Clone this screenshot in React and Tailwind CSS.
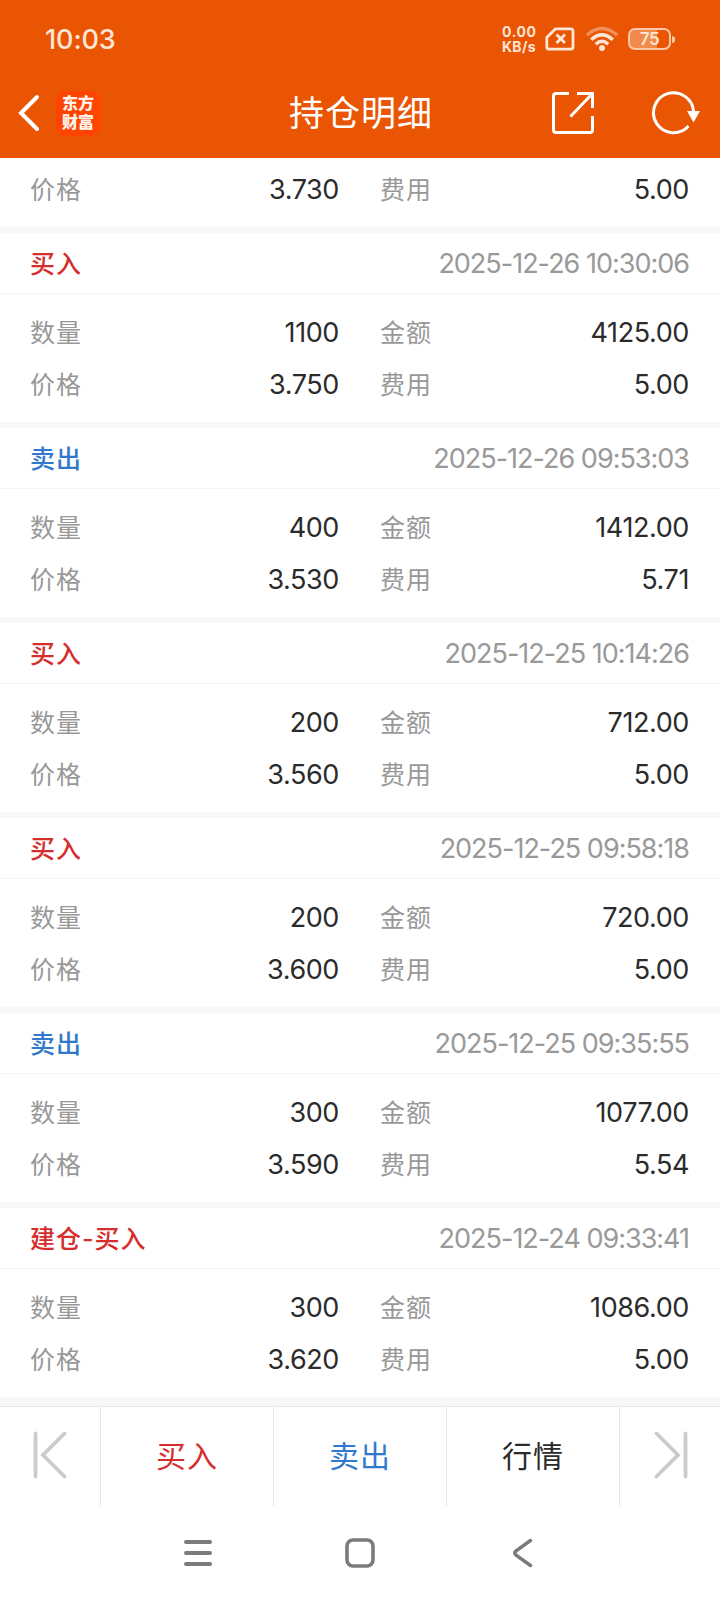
import React from 'react';
import clsx from 'clsx';

const trades = [
  { type: '买入', time: '2025-12-26 10:30:06', qty: '1100', amount: '4125.00', price: '3.750', fee: '5.00' },
  { type: '卖出', sell: true, time: '2025-12-26 09:53:03', qty: '400', amount: '1412.00', price: '3.530', fee: '5.71' },
  { type: '买入', time: '2025-12-25 10:14:26', qty: '200', amount: '712.00', price: '3.560', fee: '5.00' },
  { type: '买入', time: '2025-12-25 09:58:18', qty: '200', amount: '720.00', price: '3.600', fee: '5.00' },
  { type: '卖出', sell: true, time: '2025-12-25 09:35:55', qty: '300', amount: '1077.00', price: '3.590', fee: '5.54' },
  { type: '建仓-买入', time: '2025-12-24 09:33:41', qty: '300', amount: '1086.00', price: '3.620', fee: '5.00' },
];

function StatusBar() {
  return (
    <div className="flex h-[78px] items-center pl-[45px] pr-[45px] text-[#fde6d6]">
      <span className="pt-px text-[27px] leading-none font-medium tracking-[-0.1px]">10:03</span>
      <div className="ml-auto flex items-center">
        <div className="w-[36px] text-[14px] leading-[15px] font-bold whitespace-nowrap">
          <div className="tracking-[0.6px]">0.00</div>
          <div className="tracking-[0.3px]">KB/s</div>
        </div>
        <svg className="ml-[7px]" width="30" height="24" viewBox="0 0 30 24" fill="none" stroke="currentColor">
          <path d="M10.5 1.8H25.5Q28 1.8 28 4.3V19.7Q28 22.2 25.5 22.2H4.3Q1.8 22.2 1.8 19.7V10.5Z" strokeWidth="2.8" strokeLinejoin="round" />
          <path d="M11.5 7.5L20 16M20 7.5L11.5 16" strokeWidth="2.8" />
        </svg>
        <svg className="ml-[10px]" width="34" height="26" viewBox="0 0 34 26" fill="none" stroke="currentColor" strokeWidth="3.4">
          <path d="M1.8 9.2Q17 -4.2 32.2 9.2" opacity="0.4" />
          <path d="M6.2 13.8Q17 4 27.8 13.8" />
          <path d="M10.8 18.2Q17 12.4 23.2 18.2" />
          <circle cx="17" cy="22" r="2.9" fill="currentColor" stroke="none" />
        </svg>
        <div className="ml-[9px] flex items-center">
          <div className="flex h-[22px] w-[43px] items-center justify-center rounded-[7px] border-2 border-[#fbc7a5] bg-linear-to-r from-[#f28a4c] from-70% to-transparent to-70% text-[17px] leading-none font-semibold tracking-[-0.5px]">
            75
          </div>
          <div className="ml-px h-[7px] w-[3px] rounded-r-sm bg-[#fbc7a5]" />
        </div>
      </div>
    </div>
  );
}

function NavBar() {
  return (
    <div className="flex h-[80px] items-center pb-[10px] pl-[17px] pr-[19px]">
      <svg width="24" height="38" viewBox="0 0 24 38" fill="none" stroke="white" strokeWidth="4" strokeLinecap="round" strokeLinejoin="miter">
        <path d="M20 3L4 19L20 35" />
      </svg>
      <div className="ml-[15px] flex h-[45px] w-[44px] flex-col items-center justify-center rounded-[9px] bg-[#ff4300] text-[16px] leading-[19px] font-black text-[#fff3ec]">
        <span>东方</span>
        <span>财富</span>
      </div>
      <h1 className="ml-[189px] pt-px text-[35px] leading-none tracking-[1px] text-white">持仓明细</h1>
      <svg className="ml-auto" width="44" height="44" viewBox="0 0 44 44" fill="none" stroke="white" strokeWidth="3">
        <path d="M18 2.5H5Q2.5 2.5 2.5 5V39Q2.5 41.5 5 41.5H39Q41.5 41.5 41.5 39V25" />
        <path d="M26 2.5H41.5V17M41 3L19.5 25.5" />
      </svg>
      <svg className="ml-[56px]" width="50" height="44" viewBox="0 0 50 44" fill="none">
        <path d="M37.5 35A20 20 0 1 1 42.5 21" stroke="white" strokeWidth="3" />
        <path d="M36 20H49L42.5 31.5Z" fill="white" />
      </svg>
    </div>
  );
}

function Row({ cells }) {
  return (
    <div className="flex h-[52px] items-center pt-px pl-[30px] pr-[31px]">
      {cells.map(([label, value], i) => (
        <div key={label} className={clsx('flex items-center justify-between', i === 0 ? 'w-[309px]' : 'ml-[41px] flex-1')}>
          <span className="pt-px text-[25px] leading-none tracking-[1px] text-[#989898]">{label}</span>
          <span className="text-[27px] leading-none tracking-[-0.4px] text-[#2b2b2b]">{value}</span>
        </div>
      ))}
    </div>
  );
}

function TradeCard({ trade }) {
  return (
    <section className="mt-[6px] bg-white">
      <div className="flex h-[61px] items-center justify-between border-b border-[#f4f5f6] pt-px pl-[30px] pr-[31px]">
        <span className={clsx('pt-px text-[25px] leading-none font-medium tracking-[1px]', trade.sell ? 'text-[#3179cc]' : 'text-[#d62d2d]')}>
          {trade.type}
        </span>
        <span className="text-[27px] leading-none tracking-[-1px] text-[#999999]">{trade.time}</span>
      </div>
      <div className="py-3">
        <Row cells={[['数量', trade.qty], ['金额', trade.amount]]} />
        <Row cells={[['价格', trade.price], ['费用', trade.fee]]} />
      </div>
    </section>
  );
}

function JumpIcon({ flip }) {
  return (
    <svg className={clsx('mb-[3px]', flip && 'ml-[2px] rotate-180')} width="34" height="48" viewBox="0 0 34 48" fill="none" stroke="#cbcbcb" strokeWidth="3.8" strokeLinecap="round">
      <path d="M2.5 2.5V45.5M31.5 2.5L10 24L31.5 45.5" />
    </svg>
  );
}

function ActionBar() {
  return (
    <div className="flex h-[100px] border-t border-[#e8e8e8] bg-white text-[30px] leading-none tracking-[1px]">
      <button className="flex w-[100px] items-center justify-center"><JumpIcon /></button>
      <button className="flex w-[173px] items-center justify-center border-l border-[#e8e8e8] pb-px text-[#d62d2d]">买入</button>
      <button className="flex w-[173px] items-center justify-center border-l border-[#e8e8e8] pb-px text-[#3179cc]">卖出</button>
      <button className="flex w-[173px] items-center justify-center border-l border-[#e8e8e8] pb-px text-[#2b2b2b]">行情</button>
      <button className="flex flex-1 items-center justify-center border-l border-[#e8e8e8]"><JumpIcon flip /></button>
    </div>
  );
}

function SystemNav() {
  return (
    <div className="flex h-[94px] items-center bg-white pl-[184px] text-[#7b7b7b]">
      <svg width="28" height="30" viewBox="0 0 28 30" stroke="currentColor" strokeWidth="4" strokeLinecap="round">
        <path d="M2 4H26M2 15H26M2 26H26" />
      </svg>
      <svg className="ml-[133px]" width="30" height="30" viewBox="0 0 30 30" fill="none" stroke="currentColor" strokeWidth="3.6">
        <rect x="2" y="2" width="26" height="26" rx="6" />
      </svg>
      <svg className="ml-[137px]" width="22" height="30" viewBox="0 0 22 30" fill="none" stroke="currentColor" strokeWidth="3.4" strokeLinecap="round">
        <path d="M18.5 2.5L3.8 13Q1.8 15 3.8 17L18.5 27.5" />
      </svg>
    </div>
  );
}

export default function App() {
  return (
    <div className="h-[1600px] w-[720px] overflow-hidden bg-[#f6f7f9] font-['Inter','Noto_Sans_CJK_SC',sans-serif]">
      <header className="bg-[#ea5504]">
        <StatusBar />
        <NavBar />
      </header>
      <main>
        {/* tail of the record scrolled under the header */}
        <div className="bg-white pt-[5px] pb-3">
          <Row cells={[['价格', '3.730'], ['费用', '5.00']]} />
        </div>
        {trades.map((trade) => (
          <TradeCard key={trade.time} trade={trade} />
        ))}
      </main>
      <footer className="mt-[9px]">
        <ActionBar />
        <SystemNav />
      </footer>
    </div>
  );
}
